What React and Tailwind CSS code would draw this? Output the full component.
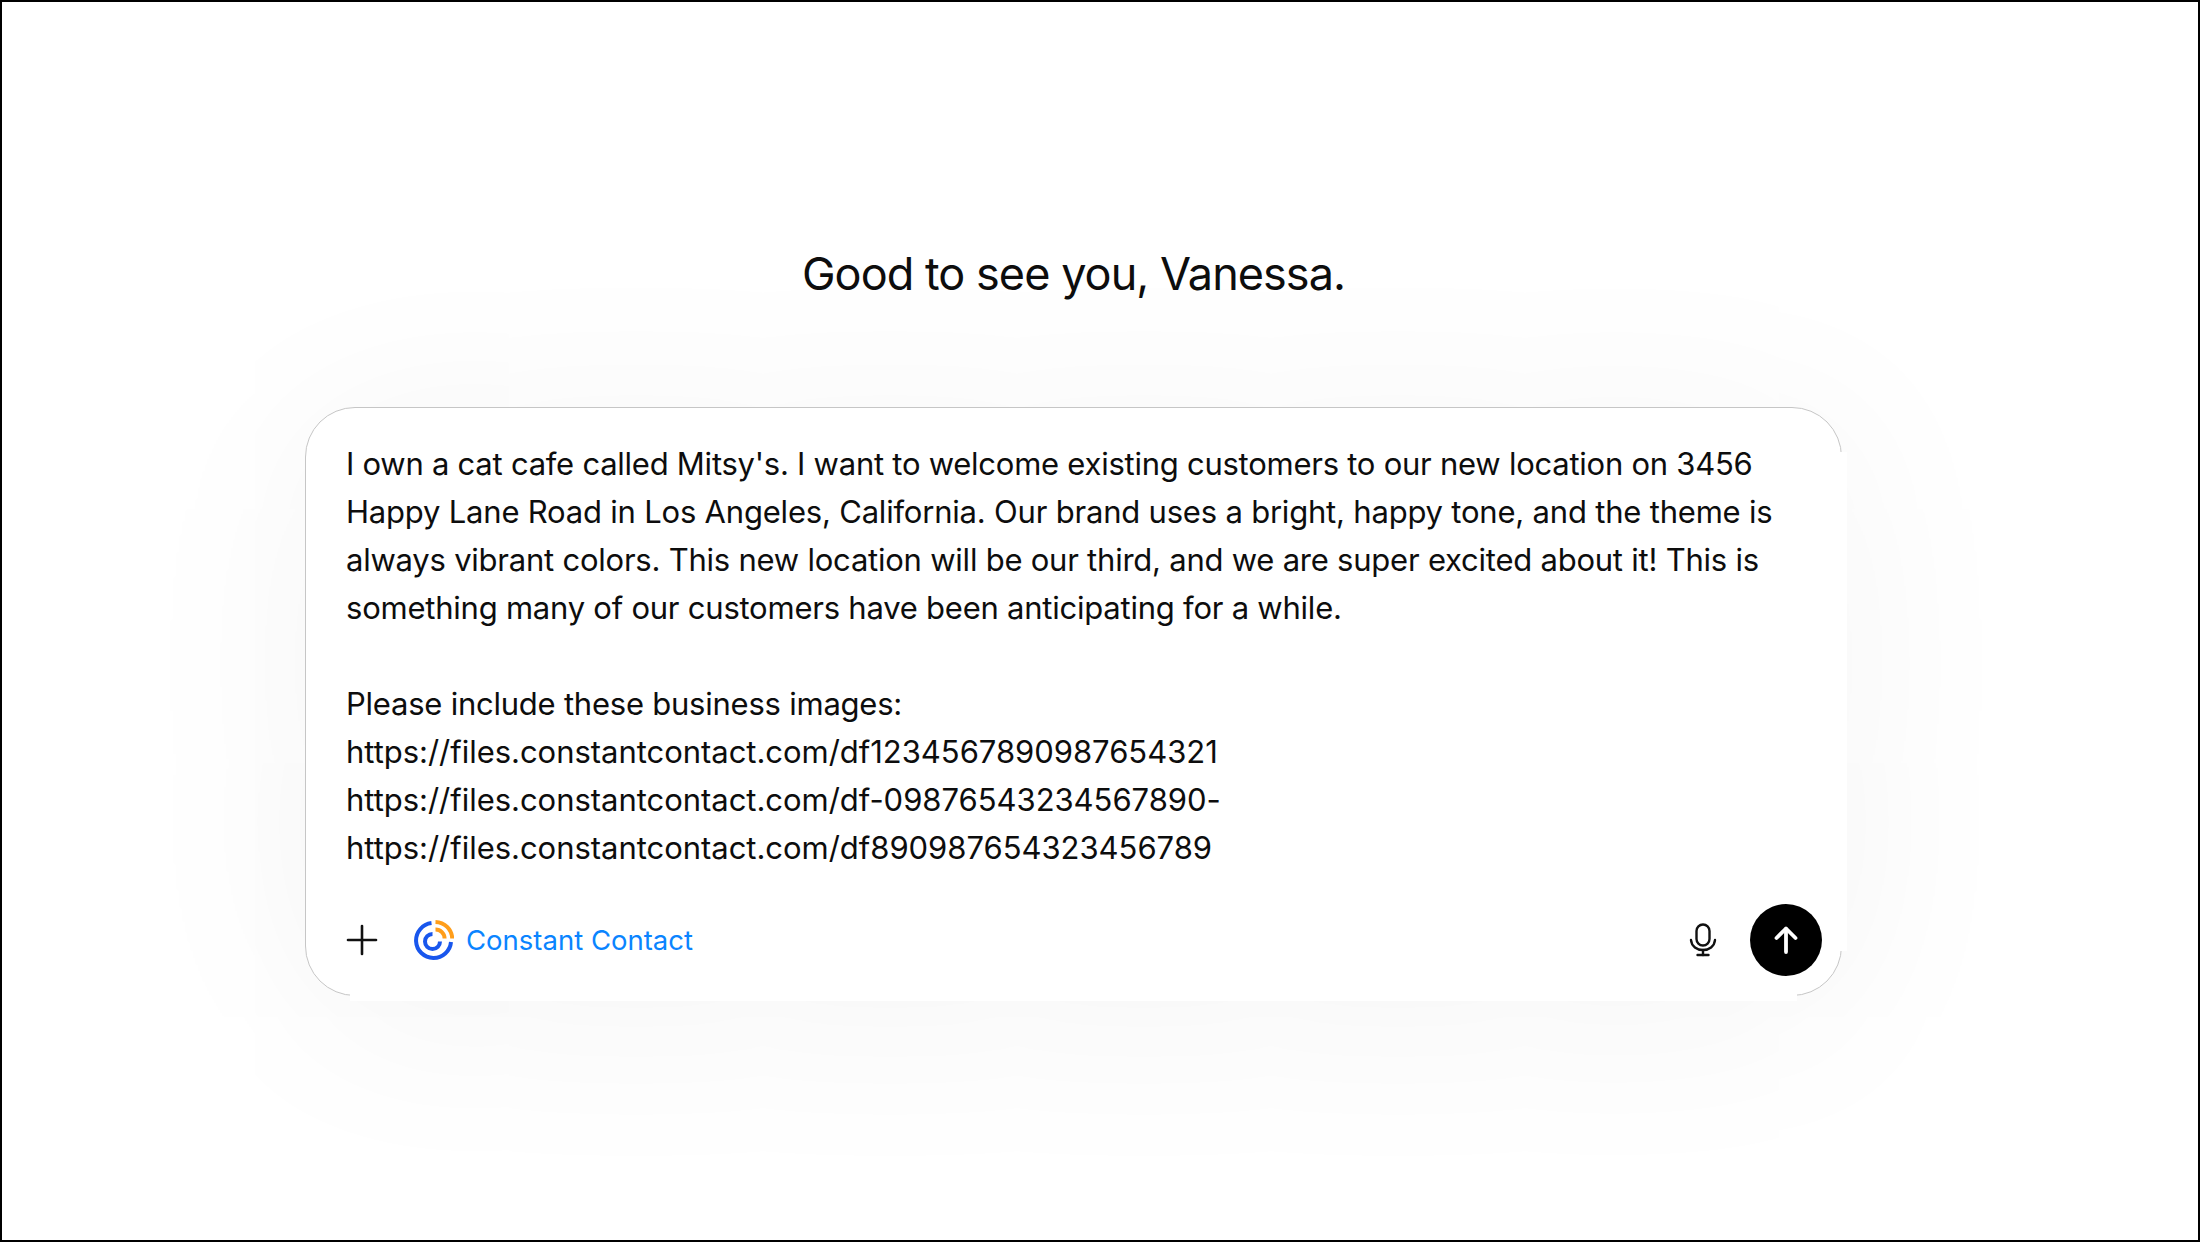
import React from 'react';
import { Plus } from 'lucide-react';

const promptLines = [
  { text: "I own a cat cafe called Mitsy's. I want to welcome existing customers to our new location on 3456", cls: 'tracking-[-0.25px]' },
  { text: 'Happy Lane Road in Los Angeles, California. Our brand uses a bright, happy tone, and the theme is', cls: 'tracking-[-0.2px]' },
  { text: 'always vibrant colors. This new location will be our third, and we are super excited about it! This is', cls: 'tracking-[-0.23px]' },
  { text: 'something many of our customers have been anticipating for a while.', cls: 'tracking-[-0.23px]' },
  { text: '\u00a0', cls: '' },
  { text: 'Please include these business images:', cls: 'tracking-[-0.23px]' },
  { text: 'https://files.constantcontact.com/df1234567890987654321', cls: 'tracking-[-0.03px]' },
  { text: 'https://files.constantcontact.com/df-09876543234567890-', cls: 'tracking-[-0.03px]' },
  { text: 'https://files.constantcontact.com/df890987654323456789', cls: 'tracking-[-0.03px]' },
];

function ConstantContactLogo() {
  return (
    <svg width="40" height="40" viewBox="0 0 40 40" fill="none" strokeWidth="4">
      {/* blue rings */}
      <path d="M17.5 3.1 A17.5 17.5 0 1 0 37 22" stroke="#1856ed" />
      <path d="M18.5 14 A7.5 7.5 0 1 0 26 21.5" stroke="#1856ed" />
      {/* orange arcs */}
      <path d="M21.5 2 A17 17 0 0 1 38.2 18.5" stroke="#ff9e1b" />
      <path d="M21.5 9.5 A9 9 0 0 1 30.6 18.4" stroke="#ff9e1b" />
    </svg>
  );
}

function MicIcon() {
  return (
    <svg width="28" height="34" viewBox="0 0 28 34" fill="none" stroke="#111" strokeWidth="2.4" strokeLinecap="round">
      <rect x="7.5" y="1.5" width="13" height="21" rx="6.5" />
      <path d="M2 17 C2.5 23.5 8 27 14 27 C20 27 25.5 23.5 26 17" />
      <path d="M14 27 V32" />
      <path d="M8.5 32 H19.5" />
    </svg>
  );
}

export default function App() {
  return (
    <div className="w-[2200px] h-[1242px] border-2 border-black bg-white font-['Inter',sans-serif] text-[#0d0d0d] overflow-hidden">
      <div className="ml-[303px] w-[1537px] flex flex-col items-center">
        <h1 className="mt-[242px] text-[45px] leading-[60px] font-normal tracking-[-0.95px]">Good to see you, Vanessa.</h1>

        <div className="relative mt-[103px] w-full h-[589px] bg-white rounded-[50px] border border-[#c6c6c6] shadow-[0_20px_200px_rgba(0,0,0,0.05)] flex flex-col">
          <div className="absolute top-[44px] bottom-[44px] right-[-6px] w-[12px] bg-white" />
          <div className="absolute left-[44px] right-[44px] bottom-[-6px] h-[12px] bg-white" />

          <div className="relative pt-[32px] pl-[40px] text-[31px] leading-[48px]">
            {promptLines.map((line, i) => (
              <div key={i} className={`whitespace-nowrap ${line.cls}`}>{line.text}</div>
            ))}
          </div>
          <div className="relative mt-auto mb-[19px] pl-[32px] pr-[19px] flex items-center">
            <Plus size={48} strokeWidth={1.3} className="text-[#111]" />
            <div className="ml-[28px] mr-[12px]">
              <ConstantContactLogo />
            </div>
            <span className="mt-[2px] text-[#0a84ff] text-[27.5px]">Constant Contact</span>
            <div className="ml-auto mr-[33px]">
              <MicIcon />
            </div>
            <button className="w-[72px] h-[72px] rounded-full bg-black flex items-center justify-center">
              <svg width="24" height="28" viewBox="0 0 24 28" fill="none" stroke="#fff" strokeWidth="3.8" strokeLinecap="round" strokeLinejoin="round">
                <path d="M12 26 V3" />
                <path d="M2.5 12 L12 2.5 L21.5 12" />
              </svg>
            </button>
          </div>
        </div>
      </div>
    </div>
  );
}
